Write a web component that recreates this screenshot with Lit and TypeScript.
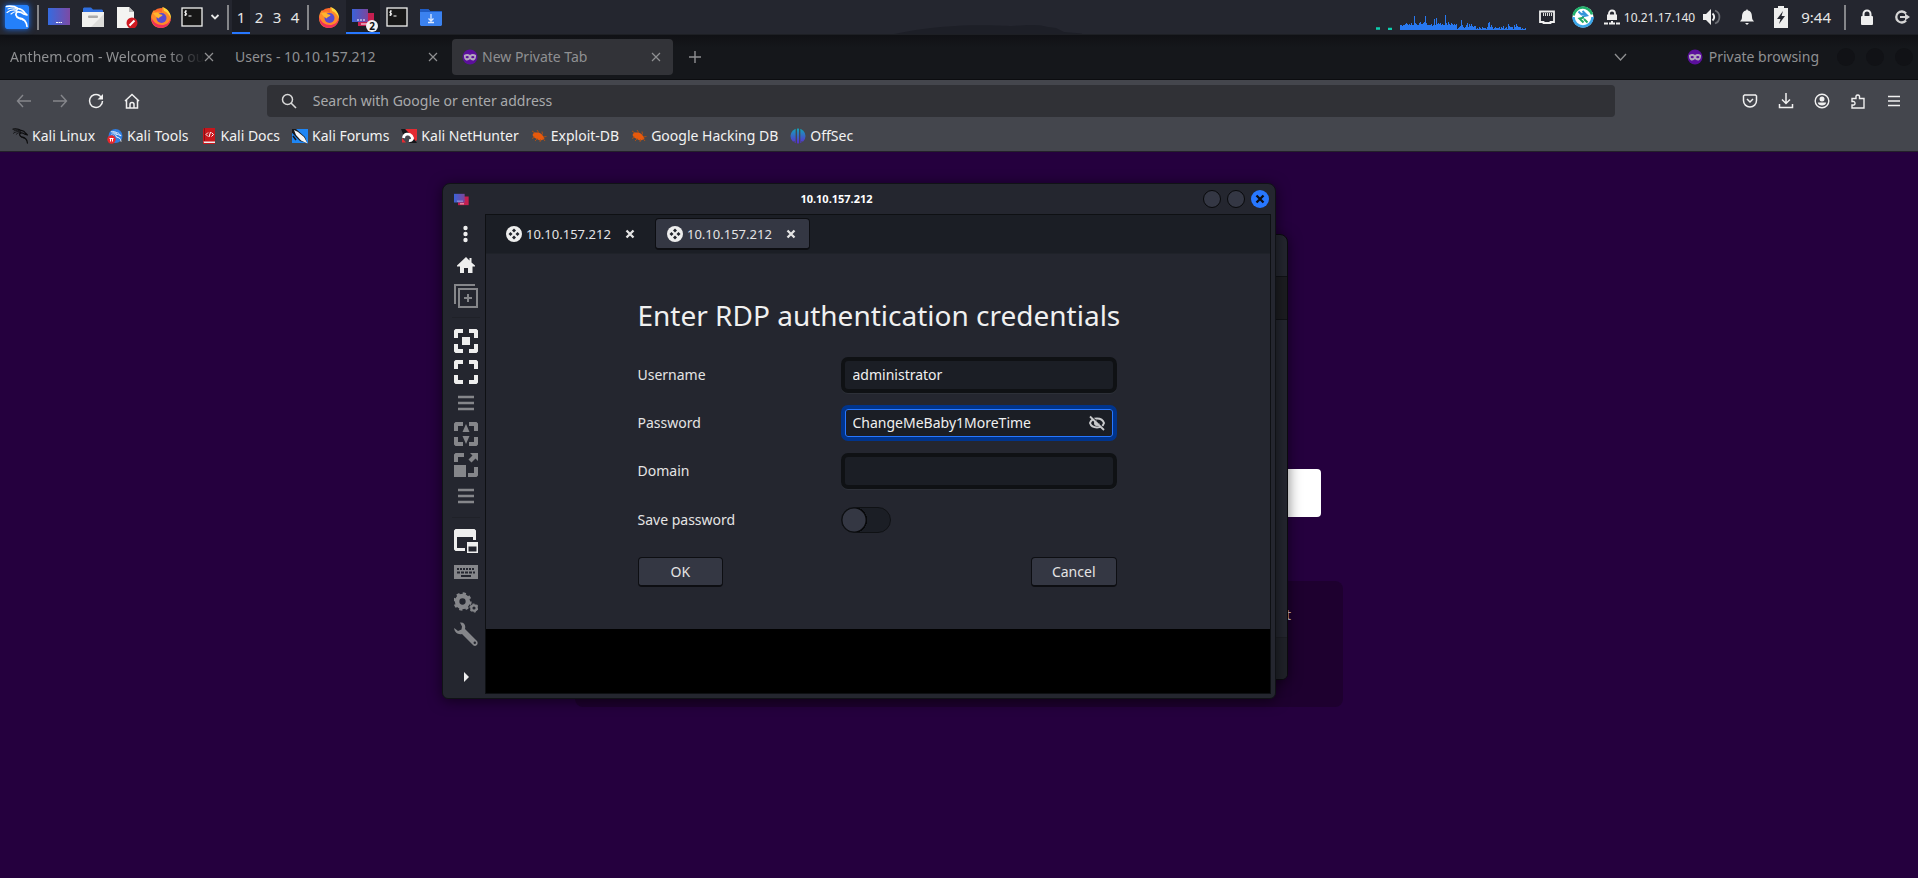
import { LitElement, html, svg, css, TemplateResult } from "lit";
import { customElement, property } from "lit/decorators.js";

const firefox = svg`
  <circle cx="11" cy="11.5" r="9.5" fill="#ff6a2b"/>
  <path d="M12 1C15 3 20 7 20.7 12C21 18 16 22 11 22C5 22 1 18 1 12C1 9 2 6 4 4L5.500 6L8 5.500C10 5.500 11 6 12 7Z" fill="#ff8a2a"/>
  <path d="M1.200 11C1 18 6 22 11 22C16 22 20.700 18 21 12C19 17 16 19 12 19C7 19 3 16 1.200 11Z" fill="#f0305c"/>
  <path d="M13 1C18 3 21.500 8 21 13C20 9 17 6 14 5Z" fill="#ffd83a"/>
  <circle cx="11.500" cy="12" r="5" fill="#5a4bd0"/>
  <path d="M3 7L8 6.500C9 8 10.500 8.500 12.500 9C12 11 9 10.500 9 12.500C7 12 5 10 3 7Z" fill="#ffb52e"/>`;

const dragon = (stroke: string) => svg`
  <path d="M1.500 1.500C6 .8 10 1.500 13 3.500C16 4 18 5 19.500 7.500L22 10L18.500 9C17 7.500 15 6.800 12.500 7C10 8 10.500 12 14 12.800C18 13.500 21.500 15.500 22 21.500" fill="none" stroke="${stroke}" stroke-width="1.700" stroke-linecap="round" stroke-linejoin="round"/>
  <path d="M3 4C6 2.800 10 3 12.500 4.500M2 7.500C5 5 9 4.500 12 5.500M6 9C8 7 10 6.500 12 6.500" fill="none" stroke="${stroke}" stroke-width="1.100" stroke-linecap="round"/>
  <path d="M11 9C11.500 13.500 17 13.500 20 16.500L16 14.800C13 14 10.500 12 11 9Z" fill="${stroke}"/>`;

const terminal = svg`
  <rect x="1" y="2" width="20" height="18" fill="#171717" stroke="#f2f2f0" stroke-width="1.300"/>
  <path d="M5.800 5C3 5 3.200 7 4.800 7.200C6.500 7.400 6.300 9.300 3.300 9M4.700 4.300V10M7.500 10H10.500" fill="none" stroke="#fff" stroke-width="1"/>`;

const remmina = svg`
  <defs>
    <linearGradient id="rb"><stop offset="0" stop-color="#3a62d8"/><stop offset="1" stop-color="#7b469c"/></linearGradient>
  </defs>
  <rect x="6" y="7" width="16" height="13" fill="#c51f50"/>
  <rect x="0" y="3" width="16" height="13" fill="url(#rb)"/>
  <path d="M5 14H7M8 14H10M11 14H13M9 18H15" stroke="#fff" stroke-width="1"/>`;

const mask = svg`
  <circle cx="8" cy="8" r="7.500" fill="#5b0f9c"/>
  <path d="M2 6C4.500 4.500 6.500 4.800 8 6C9.500 4.800 11.500 4.500 14 6C14.300 9 13 11.500 11 11.500C9.500 11.500 8.800 10.500 8 10C7.200 10.500 6.500 11.500 5 11.500C3 11.500 1.700 9 2 6Z" fill="#b3a7bd"/>
  <ellipse cx="5.200" cy="8.100" rx="1.600" ry="1.200" fill="#5b0f9c"/><ellipse cx="10.800" cy="8.100" rx="1.600" ry="1.200" fill="#5b0f9c"/>`;

const bug = svg`
  <path d="M3 4.500L6 4.500C9 4 12 7 13.500 10.500C11 13 8 12.500 6 11L3 9.500L1.500 7Z" fill="#e8590c"/>
  <path d="M1 3L4 5M6 2L8 5M11 3.500L11.500 6.500M1 10.500L4 9M4 13L6.500 10.500M9 14L9.500 11M15.500 8.500L12 9M14 13L12 10.500" stroke="#b5500f" stroke-width=".9"/>`;

const corners = (c: string) => svg`
  <path d="M0 9V1.500L1.500 0H9V4H4V9ZM15 0H22.500L24 1.500V9H20V4H15ZM24 15V22.500L22.500 24H15V20H20V15ZM9 24H1.500L0 22.500V15H4V20H9Z" fill="${c}"/>`;

const bars = svg`<path d="M4 6H20M4 12H20M4 18H20" stroke="#85868a" stroke-width="2.600"/>`;

const gear = (cx: number, cy: number, r: number, n: number) => svg`
  <circle cx="${cx}" cy="${cy}" r="${r * 0.6}" fill="none" stroke="#85868a" stroke-width="${r * 0.5}"/>
  <circle cx="${cx}" cy="${cy}" r="${r * 0.88}" fill="none" stroke="#85868a" stroke-width="${r * 0.28}"
    stroke-dasharray="${(Math.PI * r * 0.88) / n}"/>`;

const load = [4, 4, 3, 4, 4, 5, 6, 5, 4, 5, 4, 6, 4, 4, 13, 6, 5, 4, 4, 6, 7, 5, 5, 6, 7, 13, 6, 4, 4, 4, 4, 5, 3, 4, 10, 4, 11, 5, 6, 5, 6, 4, 5, 4, 4, 14, 6, 4, 7, 5, 4, 6, 5, 4, 5, 4, 5, 0, 1, 2, 3, 9, 4, 2, 1, 2, 4, 6, 2, 5, 3, 5, 3, 2, 3, 3, 0, 1, 0, 2, 1, 0, 2, 1, 1, 1, 0, 2, 6, 7, 2, 4, 2, 0, 1, 2, 1, 1, 1, 2, 0, 2, 1, 3, 0, 1, 2, 0, 5, 3, 2, 2, 2, 0, 4, 2, 5, 3, 2, 2, 2, 0, 1, 0, 0, 1];

const icons: Record<string, TemplateResult> = {
  kali: svg`<rect x="0" y="0" width="24" height="24" rx="2" fill="#2480fb"/>${dragon("#fff")}`,
  desktop: svg`<defs><linearGradient id="dk"><stop offset="0" stop-color="#356be0"/><stop offset="1" stop-color="#7d4aa4"/></linearGradient></defs>
    <rect y="2" width="22" height="17" fill="url(#dk)"/><path d="M8 16.500H10M10.500 16.500H12M12.500 16.500H14" stroke="#fff"/>`,
  files: svg`<path d="M1 6V2.500L2 1.500H9L11 3.500H20L21 4.500V7Z" fill="#2f6fe0"/><path d="M0 6H22V21H0Z" fill="#f1f1ef"/>
    <path d="M22 8V21H9Z" fill="#dcdcda"/><rect x="6" y="9.500" width="10" height="2.500" rx="1" fill="#aaa"/>`,
  doc: svg`<path d="M1 1H13L18 6V22H1Z" fill="#f4f4f2"/><path d="M13 1L18 6H13Z" fill="#b8b8b8"/><circle cx="16" cy="17" r="5.500" fill="#cf1a22"/>
    <path d="M13.500 19.500L18.500 14.500" stroke="#fff" stroke-width="2"/>`,
  firefox,
  terminal,
  remmina,
  download: svg`<path d="M0 3H8L10 5H22V19L21 20H1L0 19Z" fill="#3b82f0"/><path d="M0 3H8L10 5H22V6H0Z" fill="#1f5cc4"/>
    <path d="M11 8V15M8.500 12.500L11 15L13.500 12.500M8 16.500H14" fill="none" stroke="#dce8ff" stroke-width="1.300"/>`,
  chevron: svg`<path d="M1.500 3L5 6.500L8.500 3" fill="none" stroke="currentColor" stroke-width="1.800"/>`,
  chevronThin: svg`<path d="M1 3L6.500 9L12 3" fill="none" stroke="currentColor" stroke-width="1.300"/>`,
  ethernet: svg`<path d="M1 2.500H15V13H11.500V14H4.500V13H1Z" fill="none" stroke="#eee" stroke-width="1.800"/><path d="M4.500 4V7M6.500 4V7M8.500 4V7M10.500 4V7M12.500 4V7" stroke="#eee" stroke-width=".9"/>`,
  sync: svg`<circle cx="11" cy="11" r="10.500" fill="#fff"/><path d="M1.500 9.500A9.500 9.500 0 0 1 20 8.500" fill="none" stroke="#21b06b" stroke-width="2.500"/>
    <path d="M20.500 11A9.500 9.500 0 1 1 1.500 11" fill="none" stroke="#3aa5e8" stroke-width="2.500"/>
    <path d="M6.500 5.500L10 9M10.500 5L15 9.500L10 10.500M8 7.500L13 8.500" fill="none" stroke="#3595db" stroke-width="2"/><path d="M15.500 16.500L12 13M12 11.500L7.500 12.500L11.500 16.500" fill="none" stroke="#21a866" stroke-width="2"/>`,
  vpn: svg`<path d="M5 7V4.500A3 3 0 0 1 11 4.500V7" fill="none" stroke="#eee" stroke-width="1.800"/><rect x="3" y="5.500" width="10" height="5.500" fill="#eee"/>
    <path d="M0 14.500H4M12 14.500H16M5 14.500H11M8 12V15" stroke="#eee" stroke-width="2"/>`,
  volume: svg`<path d="M0 5H3L8 0V16L3 11H0Z" fill="#eee"/><path d="M9.500 4.500A4.500 4.500 0 0 1 9.500 11.500" fill="none" stroke="#eee" stroke-width="2"/>
    <path d="M12 1.500A7 7 0 0 1 12 14.500" fill="none" stroke="#6d6f75" stroke-width="1.800"/>`,
  bell: svg`<path d="M8 0L9 1.500C12 2 13 5 13 8C13 10.500 14 11 15 12.500H1C2 11 3 10.500 3 8C3 5 4 2 7 1.500ZM6 14H10L8 16Z" fill="#eee"/>`,
  battery: svg`<path d="M5 0H11V2H15V22H1V2H5Z" fill="#eee"/><path d="M10 5L4 13H7.500L6 18L12 10H8.500Z" fill="#24262f"/>`,
  lock: svg`<path d="M4.500 8V5A3.500 3.500 0 0 1 11.500 5V8" fill="none" stroke="#eee" stroke-width="2"/><rect x="2" y="7" width="12" height="9" rx="1" fill="#eee"/>`,
  logout: svg`<path d="M12 4.500A5.500 5.500 0 1 0 12 11.500" fill="none" stroke="#d5d5d5" stroke-width="2.300"/><path d="M6 7H11V4.500L16 8L11 11.500V9H6Z" fill="#d5d5d5"/>`,
  cross: svg`<path d="M1 1L9 9M9 1L1 9" stroke="currentColor" stroke-width="1.200"/>`,
  crossBold: svg`<path d="M1.500 1.500L8.500 8.500M8.500 1.500L1.500 8.500" stroke="currentColor" stroke-width="2.300"/>`,
  plus: svg`<path d="M6 0V12M0 6H12" stroke="currentColor" stroke-width="1.400"/>`,
  mask,
  back: svg`<path d="M15 8H1.500M7 2L1.500 8L7 14" fill="none" stroke="currentColor" stroke-width="1.400"/>`,
  forward: svg`<path d="M1 8H14.500M9 2L14.500 8L9 14" fill="none" stroke="currentColor" stroke-width="1.400"/>`,
  reload: svg`<path d="M14.500 8A6.500 6.500 0 1 1 11.500 2.500L13 4" fill="none" stroke="currentColor" stroke-width="1.500"/><path d="M15 1V6.500H9.500Z" fill="currentColor"/>`,
  home: svg`<path d="M1 8L8 1.500L15 8M2.500 7V15H6V11.500A2 2 0 0 1 10 11.500V15H13.500V7M6 15H10" fill="none" stroke="currentColor" stroke-width="1.500"/>`,
  search: svg`<circle cx="6.500" cy="6.500" r="5" fill="none" stroke="currentColor" stroke-width="1.500"/><path d="M10 10L15 15" stroke="currentColor" stroke-width="1.600"/>`,
  pocket: svg`<path d="M2.500 2H13.500L14.500 3V7.500A6.500 6.500 0 0 1 1.500 7.500V3Z" fill="none" stroke="currentColor" stroke-width="1.500"/><path d="M5 6L8 9L11 6" fill="none" stroke="currentColor" stroke-width="1.500"/>`,
  save: svg`<path d="M8 0V10.500M4 6.500L8 10.500L12 6.500M1.500 11V14.500H14.500V11" fill="none" stroke="currentColor" stroke-width="1.500"/>`,
  account: svg`<circle cx="8" cy="8" r="6.800" fill="none" stroke="currentColor" stroke-width="1.400"/><circle cx="8" cy="6" r="2.500" fill="currentColor"/><path d="M3.800 9.500H12.200C12 13.500 4 13.500 3.800 9.500Z" fill="currentColor"/>`,
  extension: svg`<path d="M2 5.500H6V3A2 2 0 0 1 9.500 3V5.500H14V15H2V12H4A2 2 0 0 0 4 8.500H2Z" fill="none" stroke="currentColor" stroke-width="1.400"/>`,
  menu: svg`<path d="M2 3.500H14M2 8H14M2 12.500H14" stroke="currentColor" stroke-width="1.400"/>`,
  bmKali: svg`<g transform="scale(.7)">${dragon("#0b0b0c")}</g>`,
  bmTools: svg`<circle cx="8.500" cy="8" r="7" fill="#2f7de0"/><g transform="translate(3.500 3) scale(.48)">${dragon("#fff")}</g><circle cx="4.500" cy="11.500" r="4.200" fill="#e8272c"/><path d="M2.500 10.500H6.500M3.500 10.500V13.500M5.500 10.500V13.500" stroke="#fff"/>`,
  bmDocs: svg`<path d="M2 1L3 0H14V16H2Z" fill="#c8161c"/><path d="M3 0H4V13H3Z" fill="#8d1015"/><path d="M2.500 13.500H14V15H3Z" fill="#eee"/><path d="M7 4.500L5 6.500L7 8.500M10.500 4.500L12.500 6.500L10.500 8.500M9.500 4L8 9" fill="none" stroke="#fff"/>`,
  bmForums: svg`<rect y="1" width="16" height="14" fill="#1e86f5"/><path d="M0 1H4L13 9L15 15L8 13L0 5Z" fill="#16181d"/><path d="M2 2L6 4L12 9L15.500 15.500L9 12.500L4 7Z" fill="#f4f4f4"/><path d="M0 5L7 13L6 15H0Z" fill="#1e86f5"/><path d="M1 8L4 12" stroke="#16181d" stroke-width="1.500"/>`,
  bmHunter: svg`<path d="M4 1H16V12L13 14Z" fill="#e32b32"/><path d="M0 1H4L14 11L11 8L2 6Z" fill="#15161a"/><path d="M8 15L13 11L16 15Z" fill="#15161a"/><path d="M2.500 10C3 5.500 8 5 10.500 8C12.500 10.500 11 13 8 12.500" fill="none" stroke="#fff" stroke-width="2.800"/><path d="M1 10L5 14.500H1Z" fill="#e32b32"/>`,
  bug,
  offsec: svg`<defs><linearGradient id="os" x2="0" y2="1"><stop offset="0" stop-color="#12a5b8"/><stop offset="1" stop-color="#5b2bd0"/></linearGradient></defs>
    <circle cx="8" cy="8" r="7.500" fill="url(#os)"/><path d="M6.300 0V16M9.700 0V16" stroke="#44464d" stroke-width="1.300"/><path d="M4 13V16M12 13V16" stroke="#44464d"/>`,
  rdp: svg`<circle cx="8" cy="8" r="8" fill="#eee"/><path d="M8 2.500L10 4.500L8 6.500L6 4.500ZM8 9.500L10 11.500L8 13.500L6 11.500ZM4.500 6L6.500 8L4.500 10L2.500 8ZM11.500 6L13.500 8L11.500 10L9.500 8Z" fill="#20232b"/>`,
  dots: svg`<circle cx="11.500" cy="6" r="2.200" fill="#eee"/><circle cx="11.500" cy="12" r="2.200" fill="#eee"/><circle cx="11.500" cy="18" r="2.200" fill="#eee"/>`,
  house: svg`<path d="M12 4L15.500 7.500V5H17.500V9.500L21 12.500V13.500H18.500V20H14V15H10V20H6V13.500H3V12.500Z" fill="#eee"/>`,
  addPage: svg`<path d="M1 20V1H21" fill="none" stroke="#85868a" stroke-width="2"/><rect x="5" y="5" width="18" height="18" fill="none" stroke="#85868a" stroke-width="2"/><path d="M14 10V18M10 14H18" stroke="#85868a" stroke-width="2"/>`,
  fit: svg`${corners("#eee")}<rect x="8" y="8" width="8" height="8" fill="#eee"/>`,
  full: corners("#eee"),
  bars,
  scale: svg`${corners("#85868a")}<path d="M12 2L15.500 10H8.500ZM12 22L15.500 14H8.500Z" fill="#85868a"/>`,
  grow: svg`<path d="M0 9V1.500L1.500 0H10V4H4V9ZM0 12H12V24H0ZM20 14H24V22.500L22.500 24H14V20H20ZM16 0H24V8L21.500 5.500L17.500 9.500L14.500 6.500L18.500 2.500Z" fill="#85868a"/>`,
  windows: svg`<path d="M0 1.500L1.500 0H20.500L22 1.500V11H19V8H3V19H11V22H1.500L0 20.500ZM13 13H24V24H13ZM14.500 17.500V22.500H22.500V17.500Z" fill="#eee" fill-rule="evenodd"/>`,
  keyboard: svg`<rect y="5" width="24" height="14" fill="#85868a"/><path d="M3 9H21" stroke="#24262f" stroke-width="2" stroke-dasharray="2 1"/><path d="M3 12.500H21" stroke="#24262f" stroke-width="2" stroke-dasharray="3 1"/><path d="M7 16H17" stroke="#24262f" stroke-width="2"/>`,
  gears: svg`${gear(8.5, 10.5, 9, 8)}${gear(20, 17, 4.5, 6)}`,
  wrench: svg`<path d="M6 .5C10 0 12 3 11 7L23 19C25 22 22 25 19.500 23.500L8 12C4 13 0 10 .2 6L4 9L7.500 7.500L8 4.500Z" fill="#85868a"/><circle cx="20.800" cy="20.800" r="1.200" fill="#24262f"/>`,
  caret: svg`<path d="M10 7L15 12L10 17Z" fill="#eee"/>`,
  eyeOff: svg`<path d="M1 8C3 2 13 2 15 8C13 14 3 14 1 8Z" fill="none" stroke="#c9cacc" stroke-width="2"/><path d="M8 5A3 3 0 1 0 11 8H8Z" fill="#c9cacc"/><path d="M3 2L15.500 14" stroke="#1b1e25" stroke-width="1.500"/><path d="M1 1.500L15 15" stroke="#c9cacc" stroke-width="1.800"/>`,
};

@customElement("ui-icon")
class UiIcon extends LitElement {
  @property() name = "";
  @property({ type: Number }) w = 16;
  @property({ type: Number }) h = 16;
  static styles = css`
    :host { display: inline-flex; flex: none; }
    svg { display: block; }
  `;
  render() {
    return html`<svg width=${this.w} height=${this.h} viewBox="0 0 ${this.w} ${this.h}" aria-hidden="true">${icons[this.name]}</svg>`;
  }
}

const icon = (name: string, w = 16, h = w) => html`<ui-icon name=${name} w=${w} h=${h}></ui-icon>`;

@customElement("desktop-panel")
class DesktopPanel extends LitElement {
  static styles = css`
    :host { position: relative; display: flex; align-items: center; height: 35px; box-sizing: border-box; border-bottom: 1px solid #1d1f24; background: #24262f; color: #e6e6e6; font-size: 15px; }
    button { display: flex; align-items: center; justify-content: center; height: 34px; border: 0; padding: 0; background: none; color: inherit; font: inherit; }
    .hill { position: absolute; left: 46%; bottom: 0; width: 200px; height: 10px; }
    .group, .tray { position: relative; display: flex; align-items: center; }
    .logo { width: 34px; }
    .logo ui-icon { box-shadow: 0 0 6px #1c70f0; }
    .sep { width: 2px; height: 25px; background: #85868a; margin: 0 3px; }
    .launch { width: 34px; }
    .terminal { width: 28px; }
    .more { width: 18px; }
    .ws { width: 18px; }
    .on { position: relative; background: #1b1d24; box-shadow: inset 0 -2px #2777ff; }
    .badge { position: absolute; right: 2px; bottom: 2px; width: 12px; height: 12px; border-radius: 6px; background: #f2f2f2; color: #111; font-size: 10px; font-weight: 700; line-height: 12px; text-align: center; }
    .tray { margin-left: auto; padding-right: 8px; }
    .chart { align-self: flex-end; margin-right: 10px; display: block; }
    .ip { font-size: 12px; margin: 0 8px 0 4px; }
    .net { gap: 17px; margin-right: 10px; display: flex; align-items: center; }
    .status { display: flex; align-items: center; gap: 18px; }
    .clock { margin: 0 10px 0 12px; }
    .session { display: flex; gap: 19px; margin-left: 10px; }
  `;
  render() {
    return html`
      <svg class="hill" viewBox="0 0 200 10"><path d="M12 10C60 -1 110 1 130 2C150 0 160 1 166 3L174 4L182 8L205 10Z" fill="#1d1f27"/></svg>
      <div class="group">
        <button class="logo" aria-label="Applications">${icon("kali", 24)}</button>
        <span class="sep"></span>
        ${["desktop", "files", "doc", "firefox", "terminal"].map((n) => html`<button class="launch ${n}" aria-label=${n}>${icon(n, 22)}</button>`)}
        <button class="more" aria-label="More">${icon("chevron", 10)}</button>
        <span class="sep"></span>
        ${[1, 2, 3, 4].map((n) => html`<button class="ws ${n === 1 ? "on" : ""}">${n}</button>`)}
        <span class="sep"></span>
        <button class="launch" aria-label="Firefox window">${icon("firefox", 22)}</button>
        <button class="launch on" aria-label="Remmina windows">${icon("remmina", 22)}<span class="badge">2</span></button>
        <button class="launch" aria-label="Terminal window">${icon("terminal", 22)}</button>
        <button class="launch" aria-label="Downloads">${icon("download", 22)}</button>
      </div>
      <div class="tray">
        <svg class="chart" width="153" height="16" viewBox="0 0 153 16">
          <path d="M0 14.500H4M12 15H16" stroke="#0ccfb0" stroke-width="2.500"/>
          ${load.map((v, i) => svg`<rect x=${24 + i} y=${15 - v} width="1" height=${v + 1} fill="#2878f0"/>`)}
        </svg>
        <span class="net">${icon("ethernet")}${icon("sync", 22)}</span>
        ${icon("vpn")}<span class="ip">10.21.17.140</span>
        <span class="status">${icon("volume", 18, 16)}${icon("bell")}${icon("battery", 16, 22)}</span>
        <span class="clock">9:44</span>
        <span class="sep"></span>
        <span class="session">${icon("lock")}${icon("logout")}</span>
      </div>`;
  }
}

const bookmarks = [
  ["bmKali", "Kali Linux"], ["bmTools", "Kali Tools"], ["bmDocs", "Kali Docs"], ["bmForums", "Kali Forums"],
  ["bmHunter", "Kali NetHunter"], ["bug", "Exploit-DB"], ["bug", "Google Hacking DB"], ["offsec", "OffSec"],
];

@customElement("browser-window")
class BrowserWindow extends LitElement {
  static styles = css`
    :host { display: flex; flex-direction: column; flex: 1; font-size: 14px; line-height: 20px; }
    button { display: flex; align-items: center; justify-content: center; border: 0; padding: 0; background: none; color: inherit; font: inherit; }
    .tabs { display: flex; align-items: center; height: 45px; box-sizing: border-box; border-bottom: 1px solid #0c0d10; background: linear-gradient(#101115, #15171b 12px); color: #8f9092; }
    .tab { display: flex; align-items: center; gap: 4px; width: 225px; height: 36px; box-sizing: border-box; padding: 0 12px 0 10px; border-radius: 4px; }
    .tab .label { flex: 1; white-space: nowrap; }
    .tab.fade { gap: 0; }
    .tab.fade .label { mask-image: linear-gradient(90deg, #000 calc(100% - 36px), transparent); }
    .tab.on { width: 221px; background: #323338; margin-left: 2px; }
    .new { width: 44px; height: 36px; }
    .side { display: flex; align-items: center; margin-left: auto; padding-right: 5px; }
    .side .private { display: flex; align-items: center; gap: 6px; margin: 0 18px 0 60px; }
    .dots { display: flex; gap: 11px; }
    .dots span { width: 18px; height: 18px; border-radius: 9px; background: #111216; }
    .tools { display: flex; align-items: center; justify-content: space-between; height: 41px; padding: 0 16px; background: #44464d; color: #f0f0f0; }
    .nav, .acts { display: flex; gap: 20px; }
    .dim { color: #85868b; }
    .url { display: flex; align-items: center; width: 71.5%; height: 32px; box-sizing: border-box; padding: 0 14px; gap: 16px; border-radius: 4px; background: #303136; color: #d8d8d8; }
    .url input { flex: 1; border: 0; padding: 0; background: none; font: inherit; color: #eee; outline: none; }
    .url input::placeholder { color: #a9aaac; opacity: 1; }
    .marks { display: flex; align-items: center; gap: 12px; height: 31px; padding: 0 12px; background: #44464d; border-bottom: 1px solid #24202a; box-sizing: border-box; }
    .marks a { display: flex; align-items: center; gap: 4px; color: #f2f2f2; text-decoration: none; }
    .page { position: relative; flex: 1; background: #25003e; }
    .box { position: absolute; left: calc(50% - 362px); top: 317px; width: 724px; height: 48px; border-radius: 4px; background: #fff; }
    .card { position: absolute; left: calc(50% - 384px); top: 429px; width: 768px; height: 126px; box-sizing: border-box; padding: 24px 52px; border-radius: 8px; background: #1e002f; color: #cfc8d4; text-align: right; }
    .card p { margin: 0; }
  `;
  render() {
    return html`
      <div class="tabs">
        <div class="tab fade"><span class="label">Anthem.com - Welcome to ou</span><button aria-label="Close tab">${icon("cross", 10)}</button></div>
        <div class="tab"><span class="label">Users - 10.10.157.212</span><button aria-label="Close tab">${icon("cross", 10)}</button></div>
        <div class="tab on">${icon("mask")}<span class="label">New Private Tab</span><button aria-label="Close tab">${icon("cross", 10)}</button></div>
        <button class="new" aria-label="New tab">${icon("plus", 12)}</button>
        <div class="side">
          <button aria-label="List tabs">${icon("chevronThin", 13, 12)}</button>
          <span class="private">${icon("mask")}<span>Private browsing</span></span>
          <span class="dots"><span></span><span></span><span></span></span>
        </div>
      </div>
      <div class="tools">
        <div class="nav">
          <button class="dim" aria-label="Back">${icon("back")}</button><button class="dim" aria-label="Forward">${icon("forward")}</button>
          <button aria-label="Reload">${icon("reload")}</button><button aria-label="Home">${icon("home")}</button>
        </div>
        <div class="url">${icon("search")}<input aria-label="Address" placeholder="Search with Google or enter address" /></div>
        <div class="acts">${["pocket", "save", "account", "extension", "menu"].map((n) => html`<button aria-label=${n}>${icon(n)}</button>`)}</div>
      </div>
      <nav class="marks">${bookmarks.map(([i, t]) => html`<a href="#">${icon(i)}<span>${t}</span></a>`)}</nav>
      <div class="page"><div class="box"></div><div class="card"><p>t</p></div></div>`;
  }
}

@customElement("remote-window")
class RemoteWindow extends LitElement {
  static styles = css`
    :host { display: flex; flex-direction: column; box-sizing: border-box; width: 834px; height: 516px; border: 1px solid #101216; border-radius: 8px 8px 6px 6px; background: #24262f; color: #e4e4e4; font-size: 14px; line-height: 20px; box-shadow: 0 2px 14px rgba(0, 0, 0, .55); overflow: hidden; }
    button { display: flex; align-items: center; justify-content: center; border: 0; padding: 0; background: none; color: inherit; font: inherit; }
    .title { display: flex; align-items: center; height: 30px; padding: 0 6px 0 11px; }
    .title h1 { flex: 1; margin: 0; font-size: 11px; line-height: 16px; font-weight: 700; text-align: center; color: #fff; }
    .app { display: flex; }
    .winbtns { display: flex; gap: 6px; }
    .winbtns button { width: 18px; height: 18px; box-sizing: border-box; border: 1px solid #08090b; border-radius: 9px; background: #343744; }
    .winbtns .close { border: 0; background: #2777ff; color: #0c0d12; }
    .body { display: flex; flex: 1; padding: 0 4px 4px 0; }
    .bar { display: flex; flex-direction: column; align-items: center; width: 38px; padding: 4px 0 0 4px; }
    .bar button { width: 24px; height: 31px; }
    .bar hr { width: 28px; height: 1px; margin: 6px 0 7px; border: 0; background: #1f2128; }
    .bar .last { margin-top: 12px; }
    .main { display: flex; flex-direction: column; flex: 1; border: 1px solid #0e1013; background: #000; }
    .tabs { display: flex; align-items: center; height: 38px; padding: 0 8px; gap: 6px; background: #1b1e25; border-bottom: 1px solid #1f2229; }
    .tab { display: flex; align-items: center; gap: 4px; box-sizing: border-box; width: 155px; height: 32px; padding: 0 14px 0 12px; border-radius: 4px; font-size: 13px; }
    .tab button { margin-left: auto; }
    .tab.on { border: 1px solid #0d0e12; border-bottom-width: 2px; padding: 0 13px 0 11px; background: #343743; }
    .panel { display: flex; justify-content: center; padding: 40px 2px 42px 0; background: #24262f; }
    form { width: 479px; margin: 0; }
    h2 { margin: 0 0 21px; font-size: 28px; line-height: 42px; font-weight: 400; color: #f0f0f0; white-space: nowrap; }
    .rows { display: grid; grid-template-columns: 1fr 276px; row-gap: 12px; align-items: center; }
    .field { display: flex; align-items: center; height: 36px; box-sizing: border-box; padding: 1px 8px; border: 4px solid #0f1114; border-radius: 7px; background: #1b1e25; box-shadow: 0 1px #2d3038; }
    .field input { flex: 1; min-width: 0; border: 0; padding: 0; background: none; outline: none; color: #f0f0f0; font: inherit; }
    .field.focus { border-color: #00348c; box-shadow: inset 0 0 0 1px #2777ff; }
    .switch { appearance: none; width: 50px; height: 26px; margin: 6px 0; box-sizing: border-box; border: 1px solid #0f1114; border-radius: 13px; background: radial-gradient(circle at 12px 12px, #343743 11px, #08090b 12px, #08090b 13px, #1b1e25 13px); }
    .btns { display: flex; justify-content: space-between; margin-top: 18px; }
    .btns button { height: 30px; padding: 0 20px; border: 1px solid #0d0e12; border-bottom-width: 2px; border-radius: 4px; background: #343743; }
    .btns .ok { padding: 0 32px; }
  `;
  render() {
    const tools = ["dots", "house", "addPage", "", "fit", "full", "bars", "scale", "grow", "bars", "", "windows", "keyboard", "gears", "wrench"];
    return html`
      <div class="title">
        <span class="app"><svg width="16" height="13" viewBox="0 2 24 19" aria-hidden="true">${icons.remmina}</svg></span>
        <h1>10.10.157.212</h1>
        <div class="winbtns"><button aria-label="Minimize"></button><button aria-label="Maximize"></button><button class="close" aria-label="Close">${icon("crossBold", 10)}</button></div>
      </div>
      <div class="body">
        <div class="bar">
          ${tools.map((n) => (n ? html`<button aria-label=${n}>${icon(n, 24)}</button>` : html`<hr />`))}
          <button class="last" aria-label="Expand">${icon("caret", 24)}</button>
        </div>
        <div class="main">
          <div class="tabs">
            ${[0, 1].map((i) => html`<div class="tab ${i ? "on" : ""}">${icon("rdp")}<span>10.10.157.212</span><button aria-label="Close">${icon("crossBold", 10)}</button></div>`)}
          </div>
          <div class="panel">
            <form>
              <h2>Enter RDP authentication credentials</h2>
              <div class="rows">
                <label for="user">Username</label><div class="field"><input id="user" .value=${"administrator"} /></div>
                <label for="pass">Password</label><div class="field focus"><input id="pass" .value=${"ChangeMeBaby1MoreTime"} /><button type="button" aria-label="Hide password">${icon("eyeOff")}</button></div>
                <label for="domain">Domain</label><div class="field"><input id="domain" /></div>
                <label for="save">Save password</label><input id="save" class="switch" type="checkbox" />
              </div>
              <div class="btns"><button class="ok" type="button">OK</button><button type="button">Cancel</button></div>
            </form>
          </div>
        </div>
      </div>`;
  }
}

@customElement("app-root")
class AppRoot extends LitElement {
  static styles = css`
    :host { position: relative; display: flex; flex-direction: column; min-height: 100vh; overflow: hidden; font-family: "Noto Sans", sans-serif; background: #25003e; }
    .behind { position: absolute; left: 700px; top: 234px; width: 588px; height: 446px; box-sizing: border-box; display: flex; flex-direction: column; border: 1px solid #0b0b0f; border-radius: 8px 8px 6px 6px; background: #24262f; box-shadow: 0 2px 14px rgba(0, 0, 0, .5); overflow: hidden; }
    .head { height: 41px; border-bottom: 1px solid #101216; }
    .strip { height: 42px; background: #1c1d21; border-bottom: 1px solid #101216; }
    .foot { height: 41px; margin-top: auto; background: #202229; border-top: 1px solid #1c1e24; }
    remote-window { position: absolute; left: 442px; top: 183px; }
  `;
  render() {
    return html`
      <desktop-panel></desktop-panel>
      <browser-window></browser-window>
      <div class="behind"><div class="head"></div><div class="strip"></div><div class="foot"></div></div>
      <remote-window></remote-window>`;
  }
}
